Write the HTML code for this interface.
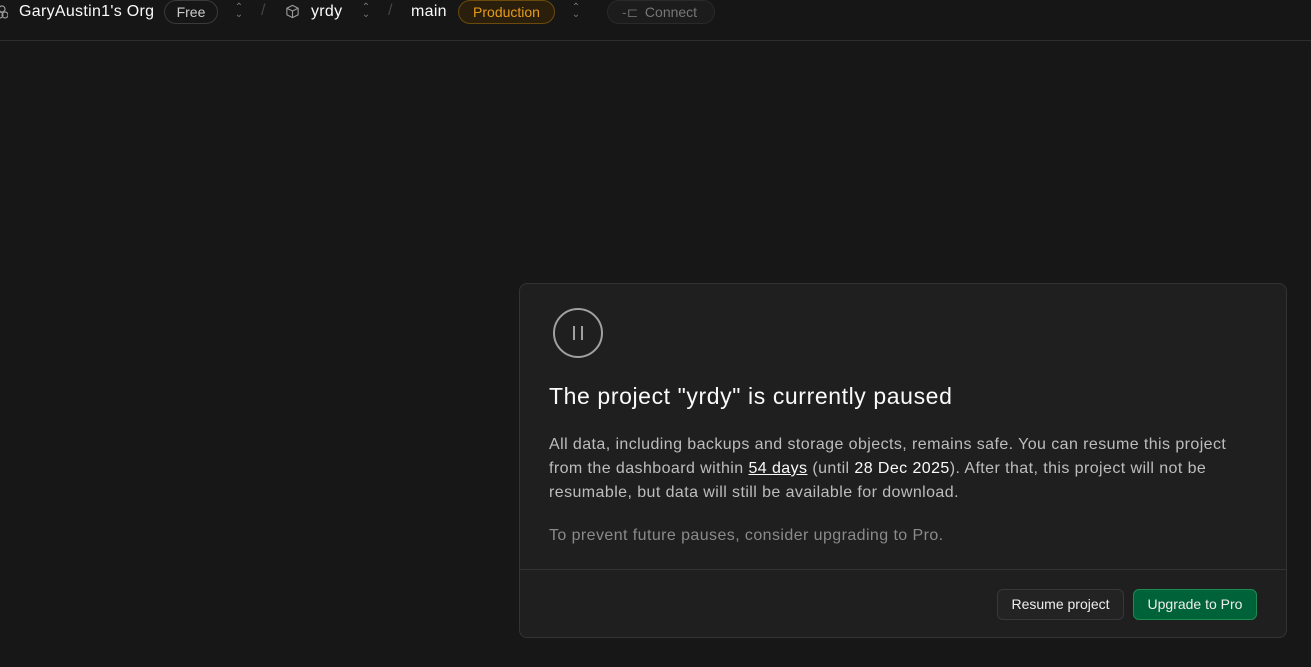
<!DOCTYPE html>
<html><head><meta charset="utf-8"><style>
*{box-sizing:border-box;margin:0;padding:0}
body{width:1311px;height:667px;background:#171717;font-family:"Liberation Sans",sans-serif;color:#ededed;position:relative;overflow:hidden}
.top{position:absolute;left:0;top:0;width:1311px;height:41px;border-bottom:1px solid #2e2e2e;background:#161616}
.t{position:absolute;top:3px;font-size:16px;line-height:18px;white-space:nowrap;letter-spacing:0.3px}
.pill{position:absolute;top:0;height:24px;border-radius:12px;font-size:14px;line-height:22px;text-align:center}
.chev{position:absolute;top:4px;color:#777;font-size:10px;line-height:7px;text-align:center;width:10px}
.slash{position:absolute;top:2px;color:#444;font-size:16px}
.card{position:absolute;left:519px;top:283px;width:768px;height:355px;background:#1f1f1f;border:1px solid #333;border-radius:8px}
.foot{position:absolute;left:0;right:0;top:285px;border-top:1px solid #333}
.btn{position:absolute;top:305px;height:31px;border-radius:6px;font-size:14px;line-height:29px;text-align:center}
p{position:absolute;left:29px;font-size:16px;line-height:24px;color:#bdbdbd;width:700px;letter-spacing:0.42px}
</style></head><body>
<div class="top">
 <svg style="position:absolute;left:-4px;top:5px" width="12" height="14" viewBox="0 0 12 14" fill="none" stroke="#999" stroke-width="1.2"><circle cx="6" cy="4" r="3"/><circle cx="4" cy="10" r="3"/><circle cx="9" cy="10" r="3"/></svg>
 <div class="t" style="left:19px;color:#fafafa">GaryAustin1's Org</div>
 <div class="pill" style="left:164px;width:54px;border:1px solid #3a3a3a;color:#ccc">Free</div>
 <div class="chev" style="left:234px">⌃<br>⌄</div>
 <div class="slash" style="left:261px">/</div>
 <svg style="position:absolute;left:285px;top:4px" width="15" height="15" viewBox="0 0 16 16" fill="none" stroke="#999" stroke-width="1.2"><path d="M8 1.5 14 4.5v7L8 14.5 2 11.5v-7z M2 4.5 8 7.5 14 4.5 M8 7.5v7"/></svg>
 <div class="t" style="left:311px;color:#fafafa">yrdy</div>
 <div class="chev" style="left:361px">⌃<br>⌄</div>
 <div class="slash" style="left:388px">/</div>
 <div class="t" style="left:411px;color:#fafafa">main</div>
 <div class="pill" style="left:458px;width:97px;border:1px solid #6b4a0c;background:#2a1f0c;color:#e89b1a">Production</div>
 <div class="chev" style="left:571px">⌃<br>⌄</div>
 <div class="pill" style="left:607px;width:108px;border:1px solid #2a2a2a;background:#1c1c1c;color:#777;padding-left:20px">Connect<span style="position:absolute;left:14px;top:0;color:#666">-⊏</span></div>
</div>
<div class="card">
 <svg style="position:absolute;left:32px;top:23px" width="52" height="52" viewBox="0 0 52 52" fill="none" stroke="#a0a0a0" stroke-width="2"><circle cx="26" cy="26" r="24"/><path d="M22 19v14M30 19v14"/></svg>
 <div style="position:absolute;left:29px;top:99px;font-size:23px;letter-spacing:0.6px;color:#fafafa">The project "yrdy" is currently paused</div>
 <p style="top:149px">All data, including backups and storage objects, remains safe. You can resume this project from the dashboard within <span style="color:#fafafa;text-decoration:underline">54 days</span> (until <span style="color:#fafafa">28 Dec 2025</span>). After that, this project will not be resumable, but data will still be available for download.</p>
 <p style="top:240px;color:#8a8a8a">To prevent future pauses, consider upgrading to Pro.</p>
 <div class="foot"></div>
 <div class="btn" style="left:477px;width:127px;border:1px solid #383838;background:#232323;color:#eee">Resume project</div>
 <div class="btn" style="left:613px;width:124px;border:1px solid #1d8a52;background:#006239;color:#eee">Upgrade to Pro</div>
</div>
</body></html>
